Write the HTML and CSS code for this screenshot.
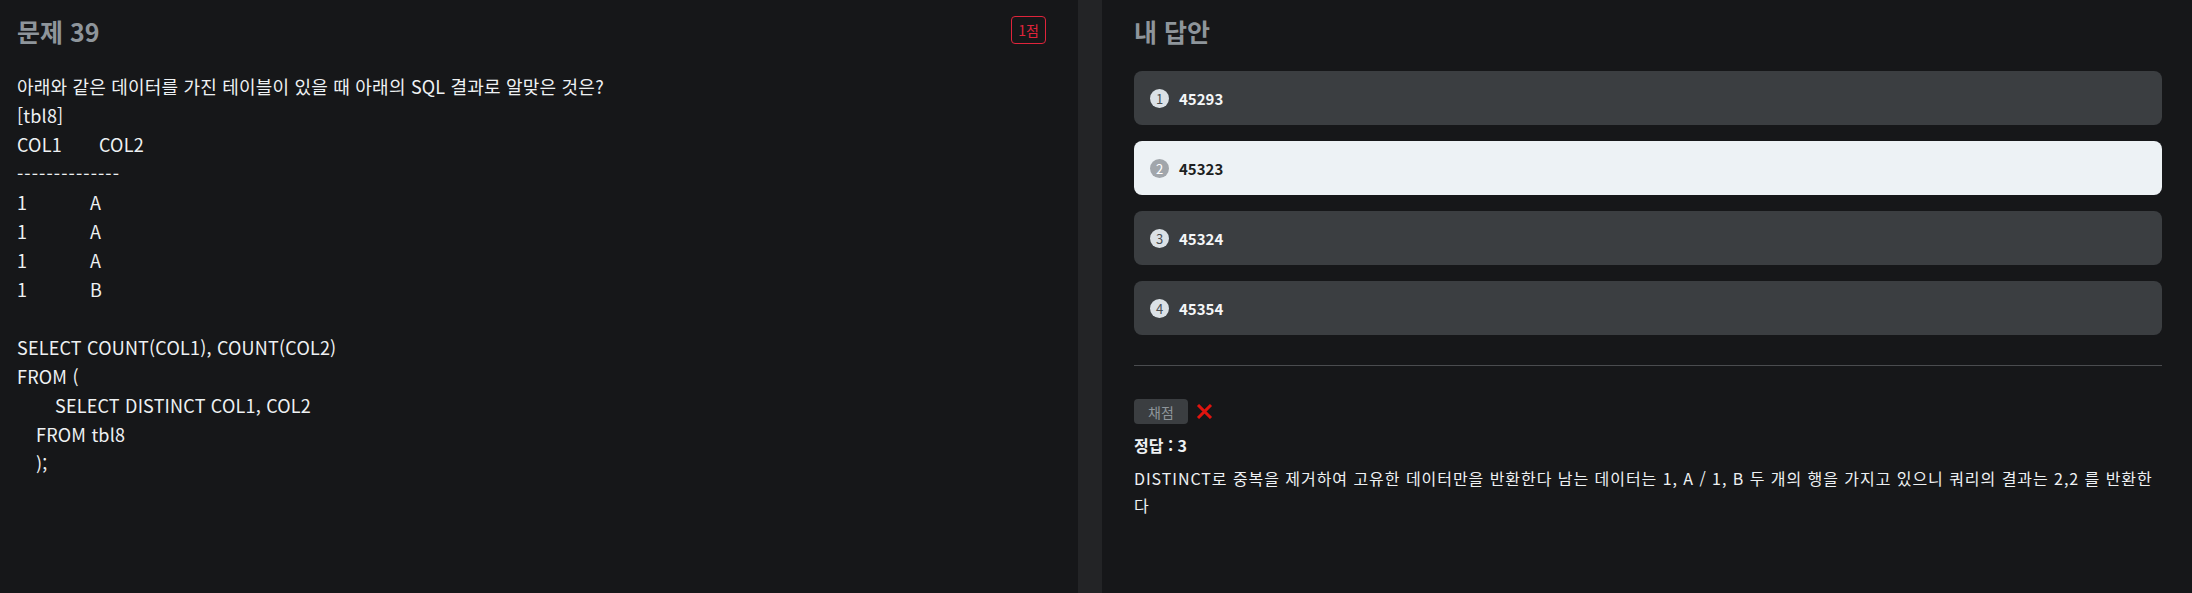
FILE: index.html
```html
<!DOCTYPE html>
<html lang="ko">
<head>
<meta charset="utf-8">
<link rel="stylesheet" href="styles.css">
</head>
<body>
<div class="page">
  <section class="question">
    <div class="q-head">
      <h2 class="q-title">문제 39</h2>
      <span class="score">1점</span>
    </div>
    <div class="q-body">
      <p>아래와 같은 데이터를 가진 테이블이 있을 때 아래의 SQL 결과로 알맞은 것은?</p>
      <p>[tbl8]</p>
      <p><span class="col-h">COL1</span>COL2</p>
      <p class="dash">--------------</p>
      <p><span class="col-r">1</span>A</p>
      <p><span class="col-r">1</span>A</p>
      <p><span class="col-r">1</span>A</p>
      <p><span class="col-r">1</span>B</p>
      <p class="blank"></p>
      <p>SELECT COUNT(COL1), COUNT(COL2)</p>
      <p>FROM (</p>
      <p class="ind2">SELECT DISTINCT COL1, COL2</p>
      <p class="ind1">FROM tbl8</p>
      <p class="ind1">);</p>
    </div>
  </section>
  <div class="gutter"></div>
  <section class="answer">
    <h2 class="a-title">내 답안</h2>
    <ul class="options">
      <li class="option"><span class="num">1</span><span class="val">45293</span></li>
      <li class="option selected"><span class="num">2</span><span class="val">45323</span></li>
      <li class="option"><span class="num">3</span><span class="val">45324</span></li>
      <li class="option"><span class="num">4</span><span class="val">45354</span></li>
    </ul>
    <hr class="sep">
    <div class="grade">
      <span class="grade-btn">채점</span>
      <svg class="wrong" width="17" height="15" viewBox="0 0 17 15"><path d="M2 1 L15 14 M15 1 L2 14" stroke="#e0140f" stroke-width="3" fill="none"/></svg>
    </div>
    <div class="correct">정답 : 3</div>
    <p class="explain">DISTINCT로 중복을 제거하여 고유한 데이터만을 반환한다 남는 데이터는 1, A / 1, B 두 개의 행을 가지고 있으니 쿼리의 결과는 2,2 를 반환한다</p>
  </section>
</div>
</body>
</html>
```

FILE: styles.css
```css
* { box-sizing: border-box; }
html, body { margin: 0; padding: 0; }
body {
  background: #161719;
  font-family: "Noto Sans CJK KR", "Noto Sans", sans-serif;
  color: #eef1f3;
}
.page {
  display: flex;
  width: 2192px;
  height: 593px;
}
.question {
  width: 1078px;
  padding: 14px 32px 0 17px;
}
.q-head {
  display: flex;
  justify-content: space-between;
  align-items: flex-start;
}
.q-title, .a-title {
  margin: 0;
  font-size: 25px;
  font-weight: 700;
  line-height: 34px;
  color: #8e959b;
}
.score {
  margin-top: 2px;
  border: 1px solid #e0243b;
  border-radius: 4px;
  color: #e0243b;
  font-size: 14px;
  line-height: 26px;
  padding: 0 6px;
}
.q-body {
  margin-top: 24px;
  font-size: 18px;
  line-height: 29px;
  letter-spacing: 0.2px;
}
.q-body p { margin: 0; min-height: 29px; white-space: nowrap; }
.q-body .dash { letter-spacing: 1.1px; }
.col-h { display: inline-block; width: 82px; }
.col-r { display: inline-block; width: 73px; }
.ind1 { padding-left: 19px; }
.ind2 { padding-left: 38px; }
.gutter {
  width: 24px;
  background: #232426;
}
.answer {
  flex: 1;
  padding: 14px 30px 0 32px;
}
.options {
  list-style: none;
  margin: 23px 0 0;
  padding: 0;
  display: flex;
  flex-direction: column;
  gap: 16px;
}
.option {
  height: 54px;
  border-radius: 8px;
  background: #3b3e41;
  display: flex;
  align-items: center;
  padding-left: 16px;
}
.num {
  width: 19px;
  height: 19px;
  border-radius: 50%;
  background: #dbe1e6;
  color: #4a4e52;
  font-size: 13px;
  font-weight: 400;
  display: flex;
  align-items: center;
  justify-content: center;
  margin-right: 10px;
}
.val {
  font-size: 15px;
  font-weight: 700;
  color: #f4f6f8;
}
.option.selected { background: #edf2f5; }
.option.selected .num { background: #a1a6ab; color: #fff; }
.option.selected .val { color: #1d1f21; }
.sep {
  margin: 30px 0 0;
  border: 0;
  border-top: 1px solid #4a4c4f;
}
.grade {
  margin-top: 33px;
  display: flex;
  align-items: center;
  gap: 8px;
}
.grade-btn {
  width: 54px;
  height: 25px;
  border-radius: 4px;
  background: #3b3e41;
  color: #8e959b;
  font-size: 14px;
  display: flex;
  align-items: center;
  justify-content: center;
}
.correct {
  margin-top: 9px;
  font-size: 16px;
  font-weight: 700;
  line-height: 24px;
}
.explain {
  margin: 8px 0 0;
  font-size: 16px;
  line-height: 27px;
  letter-spacing: 0.95px;
}
```
